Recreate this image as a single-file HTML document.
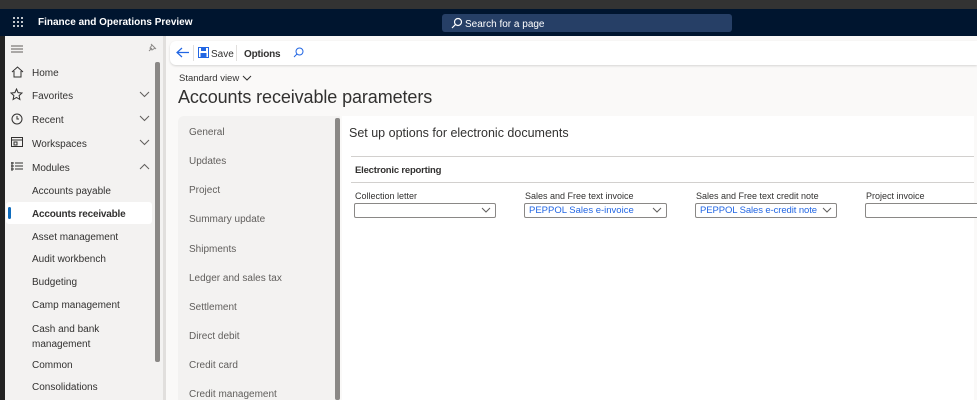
<!DOCTYPE html><html><head><style>
*{box-sizing:border-box;margin:0;padding:0}
body{width:977px;height:400px;overflow:hidden;position:relative;font-family:"Liberation Sans",sans-serif;background:#faf9f8;color:#323130}
.a{position:absolute}
.tab{position:absolute;left:189px;font-size:10px;color:#605e5c}
.lbl{position:absolute;font-size:9px;color:#323130;top:191px}
.dd{position:absolute;top:203px;height:15px;border:1px solid #8a8886;border-radius:2px;background:#fff;font-size:9.5px;color:#2266e3;padding:1px 0 0 4px}
.dd svg{position:absolute;right:4px;top:3px}
</style></head><body>
<div class="a" style="left:0;top:0;width:977px;height:9px;background:#333"></div>
<div class="a" style="left:0;top:9px;width:977px;height:27px;background:#00152f"></div>
<svg class="a" style="left:12px;top:16px" width="12" height="12" fill="#fff"><g><circle cx="2" cy="2" r="1"/><circle cx="6" cy="2" r="1"/><circle cx="10" cy="2" r="1"/><circle cx="2" cy="6" r="1"/><circle cx="6" cy="6" r="1"/><circle cx="10" cy="6" r="1"/><circle cx="2" cy="10" r="1"/><circle cx="6" cy="10" r="1"/><circle cx="10" cy="10" r="1"/></g></svg>
<div class="a" style="left:38px;top:17px;color:#fff;font-size:10px;font-weight:bold">Finance and Operations Preview</div>
<div class="a" style="left:442px;top:14px;width:290px;height:18px;background:#263f66;border-radius:3px"></div>
<svg class="a" style="left:451px;top:17px" width="12" height="12" fill="none" stroke="#fff" stroke-width="1.2"><circle cx="7" cy="5" r="3.5"/><path d="M4.5 7.5L1 11"/></svg>
<div class="a" style="left:465px;top:19px;color:#fff;font-size:10px">Search for a page</div>
<div class="a" style="left:0;top:36px;width:5px;height:364px;background:#222"></div>
<div class="a" style="left:5px;top:36px;width:158px;height:364px;background:#f3f2f1"></div>
<div class="a" style="left:163px;top:36px;width:3px;height:364px;background:#e1dfdd"></div>
<svg class="a" style="left:11px;top:44px" width="12" height="10" stroke="#605e5c"><path d="M0 2h12M0 5h12M0 8h12"/></svg>
<svg class="a" style="left:146px;top:42px" width="12" height="12" fill="none" stroke="#8a8886"><path d="M3 9l3-3M5 2l5 5M6 3l-2 3 2 2 3-2z"/></svg>
<div class="a" style="left:155px;top:62px;width:5px;height:300px;background:#8a8886;border-radius:2px"></div>
<svg class="a" style="left:11px;top:66px" width="13" height="12" fill="none" stroke="#323130"><path d="M1 6l5.5-5 5.5 5M3 5v6h7V5"/></svg>
<div class="a" style="left:32px;top:68px;font-size:10px">Home</div>
<svg class="a" style="left:10px;top:88px" width="13" height="13" fill="none" stroke="#323130"><path d="M6.5 1l1.6 3.6 3.9.4-2.9 2.6.8 3.9-3.4-2-3.4 2 .8-3.9L1 5l3.9-.4z"/></svg>
<div class="a" style="left:32px;top:91px;font-size:10px">Favorites</div>
<svg class="a" style="left:11px;top:113px" width="12" height="12" fill="none" stroke="#323130"><circle cx="6" cy="6" r="5"/><path d="M6 3v3h2"/></svg>
<div class="a" style="left:32px;top:115px;font-size:10px">Recent</div>
<svg class="a" style="left:11px;top:137px" width="12" height="11" fill="none" stroke="#323130"><rect x=".5" y=".5" width="11" height="9"/><path d="M.5 3h11M3 5h3v3H3z"/></svg>
<div class="a" style="left:32px;top:139px;font-size:10px">Workspaces</div>
<svg class="a" style="left:11px;top:161px" width="12" height="11" stroke="#323130"><path d="M1 1v9M4 2h8M4 5h8M4 8h8M0 2h3M0 5h3M0 8h3"/></svg>
<div class="a" style="left:32px;top:163px;font-size:10px">Modules</div>
<svg class="a" style="left:139px;top:91px" width="11" height="7" fill="none" stroke="#605e5c"><path d="M1 1l4.5 4.5L10 1"/></svg>
<svg class="a" style="left:139px;top:115px" width="11" height="7" fill="none" stroke="#605e5c"><path d="M1 1l4.5 4.5L10 1"/></svg>
<svg class="a" style="left:139px;top:139px" width="11" height="7" fill="none" stroke="#605e5c"><path d="M1 1l4.5 4.5L10 1"/></svg>
<svg class="a" style="left:139px;top:163px" width="11" height="7" fill="none" stroke="#605e5c"><path d="M1 6l4.5-4.5L10 6"/></svg>
<div class="a" style="left:6px;top:202px;width:146px;height:22px;background:#fff;border-radius:3px"></div>
<div class="a" style="left:8px;top:207px;width:3px;height:12px;background:#0f6cbd;border-radius:2px"></div>
<div class="a" style="left:32px;top:186px;font-size:10px">Accounts payable</div>
<div class="a" style="left:32px;top:209px;font-size:10px;font-weight:bold;letter-spacing:-.2px">Accounts receivable</div>
<div class="a" style="left:32px;top:232px;font-size:10px">Asset management</div>
<div class="a" style="left:32px;top:254px;font-size:10px">Audit workbench</div>
<div class="a" style="left:32px;top:277px;font-size:10px">Budgeting</div>
<div class="a" style="left:32px;top:300px;font-size:10px">Camp management</div>
<div class="a" style="left:32px;top:322px;font-size:10px;line-height:15px">Cash and bank<br>management</div>
<div class="a" style="left:32px;top:360px;font-size:10px">Common</div>
<div class="a" style="left:32px;top:382px;font-size:10px">Consolidations</div>
<div class="a" style="left:170px;top:41px;width:807px;height:24px;background:#fff;border-radius:6px 0 0 6px;box-shadow:0 1px 2px rgba(0,0,0,.15)"></div>
<svg class="a" style="left:176px;top:47px" width="13" height="11" fill="none" stroke="#2266e3" stroke-width="1.2"><path d="M6 1L1 5.5 6 10M1 5.5h12"/></svg>
<div class="a" style="left:193px;top:45px;width:1px;height:16px;background:#e1dfdd"></div>
<svg class="a" style="left:198px;top:47px" width="11" height="11"><rect x=".5" y=".5" width="10" height="10" fill="none" stroke="#2266e3"/><rect x="3" y="1" width="5" height="3" fill="#2266e3"/><rect x="2.5" y="6" width="6" height="4" fill="#2266e3"/></svg>
<div class="a" style="left:211px;top:49px;font-size:10px">Save</div>
<div class="a" style="left:236px;top:45px;width:1px;height:16px;background:#e1dfdd"></div>
<div class="a" style="left:244px;top:49px;font-size:10px;font-weight:bold;letter-spacing:-.2px">Options</div>
<svg class="a" style="left:293px;top:47px" width="11" height="11" fill="none" stroke="#2266e3"><circle cx="6.5" cy="4.5" r="3.5"/><path d="M4 7L1 10"/></svg>
<div class="a" style="left:179px;top:73px;font-size:9.5px">Standard view</div>
<svg class="a" style="left:242px;top:75px" width="10" height="6" fill="none" stroke="#323130"><path d="M1 1l4 4 4-4"/></svg>
<div class="a" style="left:178px;top:87px;font-size:18px;letter-spacing:-.1px">Accounts receivable parameters</div>
<div class="a" style="left:178px;top:116px;width:162px;height:284px;background:#f3f2f1;border-radius:6px 0 0 0"></div>
<div class="a" style="left:335px;top:118px;width:5px;height:282px;background:#8a8886;border-radius:2px"></div>
<div class="a" style="left:342px;top:116px;width:632px;height:284px;background:#fff"></div>
<div class="tab" style="top:127px">General</div>
<div class="tab" style="top:156px">Updates</div>
<div class="tab" style="top:185px">Project</div>
<div class="tab" style="top:214px">Summary update</div>
<div class="tab" style="top:244px">Shipments</div>
<div class="tab" style="top:273px">Ledger and sales tax</div>
<div class="tab" style="top:302px">Settlement</div>
<div class="tab" style="top:331px">Direct debit</div>
<div class="tab" style="top:360px">Credit card</div>
<div class="tab" style="top:389px">Credit management</div>
<div class="a" style="left:349px;top:126px;font-size:12.5px">Set up options for electronic documents</div>
<div class="a" style="left:351px;top:156px;width:623px;height:1px;background:#d2d0ce"></div>
<div class="a" style="left:355px;top:165px;font-size:9.5px;font-weight:bold;letter-spacing:-.2px">Electronic reporting</div>
<div class="a" style="left:351px;top:182px;width:623px;height:1px;background:#d2d0ce"></div>
<div class="lbl" style="left:355px">Collection letter</div>
<div class="lbl" style="left:525px">Sales and Free text invoice</div>
<div class="lbl" style="left:696px">Sales and Free text credit note</div>
<div class="lbl" style="left:866px">Project invoice</div>
<div class="dd" style="left:354px;width:142px"><svg width="10" height="6" fill="none" stroke="#605e5c"><path d="M1 1l4 4 4-4"/></svg></div>
<div class="dd" style="left:524px;width:143px">PEPPOL Sales e-invoice<svg width="10" height="6" fill="none" stroke="#605e5c"><path d="M1 1l4 4 4-4"/></svg></div>
<div class="dd" style="left:695px;width:142px;letter-spacing:-.1px">PEPPOL Sales e-credit note<svg width="10" height="6" fill="none" stroke="#605e5c"><path d="M1 1l4 4 4-4"/></svg></div>
<div class="dd" style="left:865px;width:115px"></div>
</body></html>
